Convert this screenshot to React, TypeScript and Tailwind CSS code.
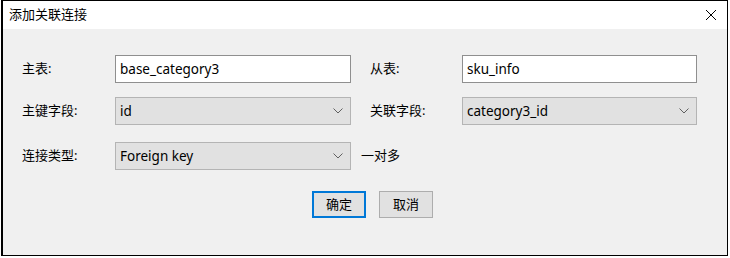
import React from "react";

const font = { fontFamily: '"Noto Sans", "Noto Sans CJK SC", sans-serif' };

function Chevron() {
  return (
    <svg width="10" height="6" viewBox="0 0 10 6" className="shrink-0">
      <path d="M0.5 0.5 L5 5 L9.5 0.5" fill="none" stroke="#606060" strokeWidth="1" />
    </svg>
  );
}

function TextBox({ value, w }: { value: string; w: string }) {
  return (
    <div className={`${w} h-[28px] bg-white border border-[#8f8f8f] flex items-center pl-[4px] text-[13.5px] text-black`}>
      {value}
    </div>
  );
}

function Combo({ value, w }: { value: string; w: string }) {
  return (
    <div className={`${w} h-[28px] bg-[#e1e1e1] border border-[#b4b4b4] flex items-center justify-between pl-[4px] pr-[7px] text-[13.5px] text-black`}>
      <span>{value}</span>
      <Chevron />
    </div>
  );
}

export default function App() {
  return (
    <div className="w-[730px] h-[258px] bg-white" style={font}>
      <div className="ml-[1px] w-[727px] h-[256px] border-y border-r border-l-2 border-black flex flex-col">
        <div className="h-[28px] bg-white flex items-center justify-between pl-[6px] pr-[10px] text-[13px] text-black">
          <span>添加关联连接</span>
          <svg width="12" height="12" viewBox="0 0 12 12">
            <path d="M1 1 L11 11 M11 1 L1 11" stroke="#000" strokeWidth="1" />
          </svg>
        </div>
        <div className="flex-1 bg-[#f0f0f0] flex flex-col text-[13px] text-black">
          <div className="mt-[26px] flex items-center">
            <span className="w-[112px] pl-[19px]">主表:</span>
            <TextBox value="base_category3" w="w-[236px]" />
            <span className="w-[111px] pl-[19px]">从表:</span>
            <TextBox value="sku_info" w="w-[235px]" />
          </div>
          <div className="mt-[14px] flex items-center">
            <span className="w-[112px] pl-[19px]">主键字段:</span>
            <Combo value="id" w="w-[236px]" />
            <span className="w-[111px] pl-[19px]">关联字段:</span>
            <Combo value="category3_id" w="w-[235px]" />
          </div>
          <div className="mt-[17px] flex items-center">
            <span className="w-[112px] pl-[19px]">连接类型:</span>
            <Combo value="Foreign key" w="w-[236px]" />
            <span className="pl-[10px]">一对多</span>
          </div>
          <div className="mt-[21px] flex items-center">
            <div className="ml-[309px] w-[54px] h-[27px] bg-[#e1e1e1] border-2 border-[#0078d7] flex items-center justify-center">
              确定
            </div>
            <div className="ml-[13px] w-[54px] h-[27px] bg-[#e1e1e1] border border-[#adadad] flex items-center justify-center">
              取消
            </div>
          </div>
        </div>
      </div>
    </div>
  );
}
